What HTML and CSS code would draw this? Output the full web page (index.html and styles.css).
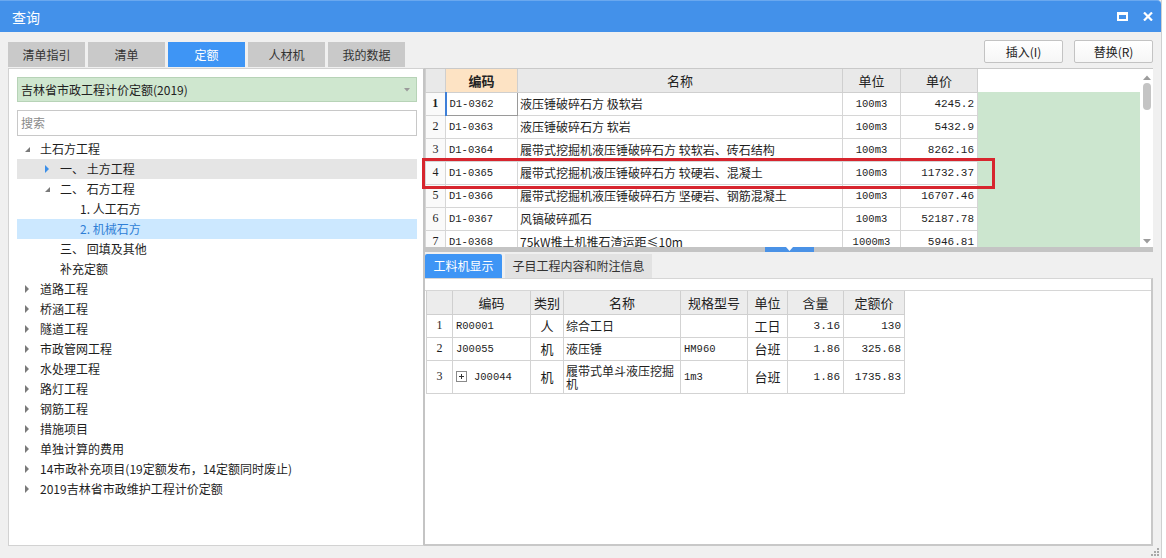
FILE: index.html
```html
<!DOCTYPE html>
<html lang="zh">
<head>
<meta charset="utf-8">
<title>查询</title>
<link rel="stylesheet" href="styles.css">
</head>
<body>
<div class="window">
  <div class="titlebar">
    <span class="title">查询</span>
    <div class="winctrls">
      <svg class="ico-max" width="11" height="9" viewBox="0 0 11 9"><rect x="1" y="1" width="9" height="7" fill="none" stroke="#fff" stroke-width="2"/><rect x="0" y="0" width="11" height="3" fill="#fff"/></svg>
      <svg class="ico-close" width="10" height="9" viewBox="0 0 10 9"><path d="M1 0.5 L9 8.5 M9 0.5 L1 8.5" stroke="#fff" stroke-width="2.2"/></svg>
    </div>
  </div>
  <div class="content">
    <div class="toolbar">
      <div class="tabs">
        <div class="tab">清单指引</div>
        <div class="tab">清单</div>
        <div class="tab active">定额</div>
        <div class="tab">人材机</div>
        <div class="tab">我的数据</div>
      </div>
      <div class="actions">
        <button class="btn">插入(I)</button>
        <button class="btn">替换(R)</button>
      </div>
    </div>
    <div class="main">
      <div class="left">
        <div class="select">
          <span>吉林省市政工程计价定额(2019)</span>
          <svg class="caret" width="6" height="4" viewBox="0 0 6 4"><path d="M0 0 L6 0 L3 3.5 Z" fill="#9a9a9a"/></svg>
        </div>
        <div class="search">搜索</div>
        <ul class="tree">
          <li class="node l0"><span class="tw"><i class="exp"></i></span>土石方工程</li>
          <li class="node l1 hover"><span class="tw"><i class="col blue"></i></span>一、 土方工程</li>
          <li class="node l1"><span class="tw"><i class="exp"></i></span>二、 石方工程</li>
          <li class="node l2"><span class="tw"></span>1. 人工石方</li>
          <li class="node l2 selected"><span class="tw"></span>2. 机械石方</li>
          <li class="node l1"><span class="tw"></span>三、 回填及其他</li>
          <li class="node l1"><span class="tw"></span>补充定额</li>
          <li class="node l0"><span class="tw"><i class="col"></i></span>道路工程</li>
          <li class="node l0"><span class="tw"><i class="col"></i></span>桥涵工程</li>
          <li class="node l0"><span class="tw"><i class="col"></i></span>隧道工程</li>
          <li class="node l0"><span class="tw"><i class="col"></i></span>市政管网工程</li>
          <li class="node l0"><span class="tw"><i class="col"></i></span>水处理工程</li>
          <li class="node l0"><span class="tw"><i class="col"></i></span>路灯工程</li>
          <li class="node l0"><span class="tw"><i class="col"></i></span>钢筋工程</li>
          <li class="node l0"><span class="tw"><i class="col"></i></span>措施项目</li>
          <li class="node l0"><span class="tw"><i class="col"></i></span>单独计算的费用</li>
          <li class="node l0"><span class="tw"><i class="col"></i></span>14市政补充项目(19定额发布，14定额同时废止)</li>
          <li class="node l0"><span class="tw"><i class="col"></i></span>2019吉林省市政维护工程计价定额</li>
        </ul>
      </div>
      <div class="right">
        <div class="topgrid">
          <table class="grid">
            <colgroup><col class="c-no"><col class="c-code"><col class="c-name"><col class="c-unit"><col class="c-price"></colgroup>
            <thead>
              <tr><th></th><th class="sel">编码</th><th>名称</th><th>单位</th><th>单价</th></tr>
            </thead>
            <tbody>
              <tr><td class="no b">1</td><td class="code focus">D1-0362</td><td class="name">液压锤破碎石方 极软岩</td><td class="unit">100m3</td><td class="num">4245.2</td></tr>
              <tr><td class="no">2</td><td class="code">D1-0363</td><td class="name">液压锤破碎石方 软岩</td><td class="unit">100m3</td><td class="num">5432.9</td></tr>
              <tr><td class="no">3</td><td class="code">D1-0364</td><td class="name">履带式挖掘机液压锤破碎石方 较软岩、砖石结构</td><td class="unit">100m3</td><td class="num">8262.16</td></tr>
              <tr><td class="no">4</td><td class="code">D1-0365</td><td class="name">履带式挖掘机液压锤破碎石方 较硬岩、混凝土</td><td class="unit">100m3</td><td class="num">11732.37</td></tr>
              <tr><td class="no">5</td><td class="code">D1-0366</td><td class="name">履带式挖掘机液压锤破碎石方 坚硬岩、钢筋混凝土</td><td class="unit">100m3</td><td class="num">16707.46</td></tr>
              <tr><td class="no">6</td><td class="code">D1-0367</td><td class="name">风镐破碎孤石</td><td class="unit">100m3</td><td class="num">52187.78</td></tr>
              <tr><td class="no">7</td><td class="code">D1-0368</td><td class="name">75kW推土机推石渣运距≤10m</td><td class="unit">1000m3</td><td class="num">5946.81</td></tr>
            </tbody>
          </table>
          <div class="filler"><div class="filler-head"></div><div class="filler-body"></div></div>
          <div class="vscroll">
            <svg width="8" height="5" viewBox="0 0 8 5"><path d="M0 5 L4 0.5 L8 5 Z" fill="#9c9c9c"/></svg>
            <div class="thumb"></div>
            <div class="track"></div>
            <svg width="8" height="5" viewBox="0 0 8 5"><path d="M0 0 L4 4.5 L8 0 Z" fill="#9c9c9c"/></svg>
          </div>
        </div>
        <div class="splitter"><div class="handle"><svg width="7" height="4" viewBox="0 0 7 4"><path d="M0 0 L7 0 L3.5 4 Z" fill="#fff"/></svg></div></div>
        <div class="btabs">
          <div class="btab active">工料机显示</div>
          <div class="btab">子目工程内容和附注信息</div>
        </div>
        <div class="bpanel">
          <div class="strip"></div>
          <table class="sub">
            <colgroup><col class="s-no"><col class="s-code"><col class="s-cat"><col class="s-name"><col class="s-spec"><col class="s-unit"><col class="s-qty"><col class="s-price"></colgroup>
            <thead>
              <tr><th></th><th>编码</th><th>类别</th><th>名称</th><th>规格型号</th><th>单位</th><th>含量</th><th>定额价</th></tr>
            </thead>
            <tbody>
              <tr><td class="no">1</td><td class="code">R00001</td><td class="ctr">人</td><td class="name">综合工日</td><td class="code"></td><td class="ctr">工日</td><td class="num">3.16</td><td class="num">130</td></tr>
              <tr><td class="no">2</td><td class="code">J00055</td><td class="ctr">机</td><td class="name">液压锤</td><td class="code">HM960</td><td class="ctr">台班</td><td class="num">1.86</td><td class="num">325.68</td></tr>
              <tr class="tall"><td class="no">3</td><td class="code"><span class="plus"></span>J00044</td><td class="ctr">机</td><td class="name wrap">履带式单斗液压挖掘机</td><td class="code">1m3</td><td class="ctr">台班</td><td class="num">1.86</td><td class="num">1735.83</td></tr>
            </tbody>
          </table>
        </div>
      </div>
      <div class="highlight"></div>
    </div>
    <div class="footer">
      <svg width="8" height="8" viewBox="0 0 8 8" fill="#a8a8a8"><rect x="6" y="0" width="2" height="2"/><rect x="3" y="3" width="2" height="2"/><rect x="6" y="3" width="2" height="2"/><rect x="0" y="6" width="2" height="2"/><rect x="3" y="6" width="2" height="2"/><rect x="6" y="6" width="2" height="2"/></svg>
    </div>
  </div>
</div>
</body>
</html>
```

FILE: styles.css
```css
* { box-sizing: border-box; }
html, body { margin: 0; padding: 0; }
body {
  width: 1166px;
  height: 558px;
  overflow: hidden;
  background: #ffffff;
  font-family: "Noto Sans CJK SC", "Microsoft YaHei", sans-serif;
  font-size: 12px;
  color: #1e1e1e;
}
.window {
  width: 1162px;
  height: 558px;
  background: #f0f0f0;
  border-right: 1px solid #cfcfcf;
  display: flex;
  flex-direction: column;
}
.titlebar {
  height: 32px;
  flex: none;
  background: #4391ea;
  border-top: 1px solid #6aa8ef;
  border-top-right-radius: 4px;
  display: flex;
  align-items: center;
  justify-content: space-between;
  padding: 0 8px 0 12px;
  color: #fff;
}
.title { font-size: 14px; line-height: 16px; }
.winctrls { display: flex; align-items: center; gap: 15px; }
.content {
  flex: 1;
  display: flex;
  flex-direction: column;
  padding: 0 8px 0 8px;
  min-height: 0;
}
.toolbar {
  height: 36px;
  flex: none;
  display: flex;
  justify-content: space-between;
}
.tabs { display: flex; gap: 3px; align-self: flex-end; margin-bottom: 1px; }
.tab {
  width: 77px;
  height: 25px;
  background: #c9c9c9;
  color: #333;
  text-align: center;
  line-height: 25px;
  font-size: 12px;
}
.tab.active { background: #3e95f5; color: #fff; }
.actions { display: flex; gap: 11px; margin-top: 8px; }
.btn {
  width: 79px;
  height: 23px;
  border: 1px solid #c3c3c3;
  border-radius: 2px;
  background: linear-gradient(#ffffff, #f6f6f6);
  font-family: inherit;
  font-size: 12px;
  color: #222;
  padding: 0;
}
.main {
  position: relative;
  height: 478px;
  flex: none;
  display: flex;
}
.left {
  width: 417px;
  flex: none;
  background: #fff;
  border: 1px solid #d2d2d2;
  border-right: 2px solid #c4c4c4;
  padding: 8px 6px 0 8px;
}
.select {
  height: 25px;
  background: #cfe7cf;
  border: 1px solid #b7d3b7;
  display: flex;
  align-items: center;
  justify-content: space-between;
  padding: 0 6px 0 3px;
  font-size: 12px;
  color: #222;
}
.search {
  margin-top: 8px;
  height: 26px;
  border: 1px solid #c8c8c8;
  line-height: 24px;
  padding-left: 3px;
  color: #8a8a8a;
}
.tree { list-style: none; margin: 3px 0 0 0; padding: 0; }
.node {
  height: 20px;
  line-height: 20px;
  display: flex;
  align-items: center;
  white-space: nowrap;
  color: #1e1e1e;
}
.node.l0 { padding-left: 3px; }
.node.l1 { padding-left: 23px; }
.node.l2 { padding-left: 43px; }
.node.hover { background: #e5e5e5; }
.node.selected { background: #cce8ff; color: #2f7fd6; }
.tw { width: 20px; height: 20px; flex: none; position: relative; }
.tw i { position: absolute; display: block; }
.tw i.exp {
  left: 5px; top: 8px;
  width: 0; height: 0;
  border-left: 5px solid transparent;
  border-bottom: 5px solid #7a7a7a;
}
.tw i.col {
  left: 5px; top: 6px;
  width: 0; height: 0;
  border-top: 4px solid transparent;
  border-bottom: 4px solid transparent;
  border-left: 4px solid #7a7a7a;
}
.tw i.col.blue { border-left-color: #3c8fe8; }

.right {
  flex: 1;
  display: flex;
  flex-direction: column;
  min-width: 0;
}
.topgrid {
  height: 179px;
  flex: none;
  display: flex;
  overflow: hidden;
  background: #fff;
  border-top: 1px solid #c9c9c9;
}
.grid {
  width: 552px;
  flex: none;
  border-collapse: collapse;
  table-layout: fixed;
  align-self: flex-start;
}
.c-no { width: 20px; }
.c-code { width: 72px; }
.c-name { width: 325px; }
.c-unit { width: 58px; }
.c-price { width: 77px; }
.grid th {
  height: 23px;
  background: #e9e9e9;
  border: 1px solid #cfcfcf;
  border-top: none;
  font-weight: normal;
  font-size: 13px;
  color: #222;
  padding: 0;
}
.grid th.sel { background: #fde3c4; font-weight: bold; }
.grid td {
  height: 23px;
  border: 1px solid #d6d6d6;
  padding: 0 3px;
  white-space: nowrap;
  overflow: hidden;
  font-size: 12px;
}
.grid td.no {
  text-align: center;
  font-family: "Liberation Serif", "DejaVu Serif", serif;
  font-size: 12px;
  padding: 0;
  background: #fafafa;
}
.grid td.no.b { font-weight: bold; }
.grid td.code,
.sub td.code {
  font-family: "Liberation Mono", "DejaVu Sans Mono", monospace;
  font-size: 10.5px;
}
.grid td.focus { border: 1px solid #9a9a9a; border-left: 2px solid #3d7fd8; }
.grid td.name { padding-left: 2px; }
.grid td.unit {
  text-align: center;
  font-family: "Liberation Mono", "DejaVu Sans Mono", monospace;
  font-size: 10.5px;
}
.grid td.num {
  text-align: right;
  font-family: "Liberation Mono", "DejaVu Sans Mono", monospace;
  font-size: 11px;
}
.filler { width: 162px; flex: none; display: flex; flex-direction: column; }
.filler-head { height: 23px; background: #fff; }
.filler-body { flex: 1; background: #cce6cf; }
.vscroll {
  width: 14px;
  flex: none;
  background: #fff;
  display: flex;
  flex-direction: column;
  align-items: center;
  padding: 6px 0 3px 0;
}
.vscroll .thumb {
  width: 8px;
  height: 27px;
  margin-top: 3px;
  border-radius: 4px;
  background: #c4c4c4;
}
.vscroll .track { flex: 1; }
.splitter {
  height: 5px;
  flex: none;
  background: #c4c4c4;
  display: flex;
  justify-content: center;
}
.handle {
  width: 49px;
  height: 5px;
  background: #4a92e6;
  display: flex;
  justify-content: center;
  align-items: flex-start;
}
.handle svg { display: block; }
.btabs {
  margin-top: 2px;
  height: 24px;
  flex: none;
  display: flex;
  gap: 3px;
}
.btab {
  height: 24px;
  line-height: 24px;
  padding: 0 8px;
  background: #e2e2e2;
  color: #333;
  font-size: 12px;
}
.btab.active {
  width: 77px;
  padding: 0;
  text-align: center;
  background: #3e95f5;
  color: #fff;
  border-radius: 2px 2px 0 0;
}
.btab:not(.active) { width: 147px; text-align: center; padding: 0; }
.bpanel {
  flex: 1;
  background: #fff;
  border-top: 1px solid #d6d6d6;
  border-right: 2px solid #c8c8c8;
  border-bottom: 2px solid #c8c8c8;
  padding-left: 1px;
}
.strip { height: 12px; border-bottom: 1px solid #d6d6d6; margin-left: -1px; }
.sub {
  border-collapse: collapse;
  table-layout: fixed;
  width: 478px;
}
.s-no { width: 26px; }
.s-code { width: 78px; }
.s-cat { width: 33px; }
.s-name { width: 117px; }
.s-spec { width: 67px; }
.s-unit { width: 40px; }
.s-qty { width: 56px; }
.s-price { width: 61px; }
.sub th {
  height: 23px;
  background: #ececec;
  border: 1px solid #cfcfcf;
  border-top: none;
  font-weight: normal;
  font-size: 13px;
  color: #222;
  padding: 0;
}
.sub td {
  height: 23px;
  border: 1px solid #d3d3d3;
  padding: 0 3px;
  font-size: 12px;
  white-space: nowrap;
}
.sub tr.tall td { height: 33px; }
.sub td.no {
  text-align: center;
  font-family: "Liberation Serif", "DejaVu Serif", serif;
  padding: 0;
}
.sub td.ctr { text-align: center; font-size: 13px; }
.sub td.name { padding-left: 2px; }
.sub td.wrap { white-space: normal; line-height: 13px; word-break: break-all; }
.sub td.num {
  text-align: right;
  font-family: "Liberation Mono", "DejaVu Sans Mono", monospace;
  font-size: 11px;
}
.plus {
  display: inline-block;
  width: 11px;
  height: 11px;
  border: 1px solid #8a8a8a;
  margin-right: 7px;
  vertical-align: -2px;
  position: relative;
}
.plus::before, .plus::after {
  content: "";
  position: absolute;
  background: #333;
}
.plus::before { left: 2px; top: 4px; width: 5px; height: 1px; }
.plus::after { left: 4px; top: 2px; width: 1px; height: 5px; }
.highlight {
  position: absolute;
  left: 414px;
  top: 90px;
  width: 573px;
  height: 31px;
  border: 3px solid #d7252e;
  pointer-events: none;
}
.footer {
  flex: 1;
  display: flex;
  justify-content: flex-end;
  align-items: flex-end;
  padding-bottom: 2px;
  margin-right: -6px;
}
```
